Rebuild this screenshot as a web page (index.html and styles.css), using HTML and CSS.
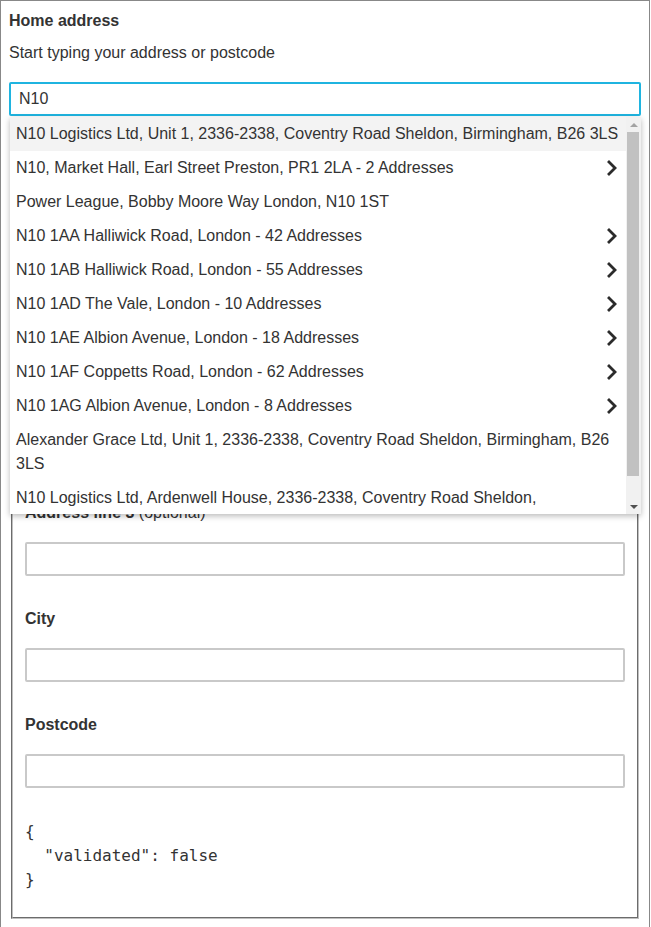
FILE: index.html
```html
<!DOCTYPE html>
<html lang="en">
<head>
<meta charset="utf-8">
<title>Home address</title>
<link rel="stylesheet" href="styles.css">
</head>
<body>
<div class="page">
  <div class="title">Home address</div>
  <p class="hint">Start typing your address or postcode</p>
  <div class="search">
    <input class="search-input" type="text" value="N10">
    <div class="menu">
      <ul class="list">
        <li class="item active"><span class="txt">N10 Logistics Ltd, Unit 1, 2336-2338, Coventry Road Sheldon, Birmingham, B26 3LS</span></li>
        <li class="item"><span class="txt">N10, Market Hall, Earl Street Preston, PR1 2LA - 2 Addresses</span><svg class="chev" viewBox="0 0 12 16" width="12" height="16"><polyline points="3,2 9,8 3,14" /></svg></li>
        <li class="item"><span class="txt">Power League, Bobby Moore Way London, N10 1ST</span></li>
        <li class="item"><span class="txt">N10 1AA Halliwick Road, London - 42 Addresses</span><svg class="chev" viewBox="0 0 12 16" width="12" height="16"><polyline points="3,2 9,8 3,14" /></svg></li>
        <li class="item"><span class="txt">N10 1AB Halliwick Road, London - 55 Addresses</span><svg class="chev" viewBox="0 0 12 16" width="12" height="16"><polyline points="3,2 9,8 3,14" /></svg></li>
        <li class="item"><span class="txt">N10 1AD The Vale, London - 10 Addresses</span><svg class="chev" viewBox="0 0 12 16" width="12" height="16"><polyline points="3,2 9,8 3,14" /></svg></li>
        <li class="item"><span class="txt">N10 1AE Albion Avenue, London - 18 Addresses</span><svg class="chev" viewBox="0 0 12 16" width="12" height="16"><polyline points="3,2 9,8 3,14" /></svg></li>
        <li class="item"><span class="txt">N10 1AF Coppetts Road, London - 62 Addresses</span><svg class="chev" viewBox="0 0 12 16" width="12" height="16"><polyline points="3,2 9,8 3,14" /></svg></li>
        <li class="item"><span class="txt">N10 1AG Albion Avenue, London - 8 Addresses</span><svg class="chev" viewBox="0 0 12 16" width="12" height="16"><polyline points="3,2 9,8 3,14" /></svg></li>
        <li class="item"><span class="txt">Alexander Grace Ltd, Unit 1, 2336-2338, Coventry Road Sheldon, Birmingham, B26 3LS</span></li>
        <li class="item"><span class="txt">N10 Logistics Ltd, Ardenwell House, 2336-2338, Coventry Road Sheldon, Birmingham, B26 3LS</span></li>
      </ul>
      <div class="scrollbar">
        <div class="sb-btn"><span class="tri-up"></span></div>
        <div class="sb-track"><div class="sb-thumb"></div></div>
        <div class="sb-btn"><span class="tri-down"></span></div>
      </div>
    </div>
  </div>
  <fieldset class="address">
    <div class="field">
      <label class="label">Address line 1</label>
      <input class="text-input" type="text">
    </div>
    <div class="field">
      <label class="label">Address line 2 <span class="opt">(optional)</span></label>
      <input class="text-input" type="text">
    </div>
    <div class="field">
      <label class="label">Address line 3 <span class="opt">(optional)</span></label>
      <input class="text-input" type="text">
    </div>
    <div class="field">
      <label class="label">City</label>
      <input class="text-input" type="text">
    </div>
    <div class="field">
      <label class="label">Postcode</label>
      <input class="text-input" type="text">
    </div>
    <pre class="json">{
  "validated": false
}</pre>
  </fieldset>
</div>
</body>
</html>
```

FILE: styles.css
```css
html, body {
  margin: 0;
  padding: 0;
  background: #fff;
}

body {
  font-family: "Liberation Sans", Arial, sans-serif;
  font-size: 16px;
  color: #333;
}

.page {
  width: 650px;
  box-sizing: border-box;
  border: 1px solid #888;
  padding: 9px 8px 40px;
}

.title {
  font-weight: bold;
  line-height: 22px;
  margin: 0 0 9px;
}

.hint {
  margin: 0 0 17px;
  line-height: 24px;
}

.search {
  position: relative;
}

.search-input {
  display: block;
  width: 100%;
  height: 34px;
  box-sizing: border-box;
  border: 2px solid #1fb4e0;
  border-radius: 2px;
  padding: 0 8px;
  font-family: "Liberation Sans", Arial, sans-serif;
  font-size: 16px;
  color: #333;
  outline: none;
  margin: 0;
}

.menu {
  position: absolute;
  top: calc(100% + 1px);
  left: 1px;
  right: 0;
  height: 397px;
  display: flex;
  background: #fff;
  box-shadow: 0 2px 6px rgba(0, 0, 0, 0.28);
  z-index: 10;
}

.list {
  flex: 1;
  min-width: 0;
  margin: 0;
  padding: 0;
  list-style: none;
  overflow: hidden;
}

.scrollbar {
  flex: none;
  width: 15px;
  display: flex;
  flex-direction: column;
  background: #f1f1f1;
}

.sb-btn {
  flex: none;
  height: 15px;
  display: flex;
  align-items: center;
  justify-content: center;
}

.tri-up {
  width: 0;
  height: 0;
  border-left: 4px solid transparent;
  border-right: 4px solid transparent;
  border-bottom: 4px solid #a3a3a3;
}

.tri-down {
  width: 0;
  height: 0;
  border-left: 4px solid transparent;
  border-right: 4px solid transparent;
  border-top: 4px solid #505050;
}

.sb-track {
  flex: 1;
  padding: 0 2px 0 1px;
}

.sb-thumb {
  height: 344px;
  background: #c1c1c1;
}

.item {
  display: flex;
  align-items: center;
  justify-content: space-between;
  padding: 5px 6px;
  line-height: 24px;
  color: #333;
}

.item.active {
  background: #f3f3f3;
}

.txt {
  flex: 1;
}

.chev {
  flex: none;
  margin-right: 2px;
  fill: none;
  stroke: #2b2b2b;
  stroke-width: 2.8;
  stroke-linecap: square;
}

.address {
  margin: 165px 2px 0;
  padding: 6px 12px 10px;
  border: 2px groove #c0c0c0;
}

.field {
  margin-bottom: 31px;
}

.label {
  display: block;
  font-weight: bold;
  line-height: 24px;
  margin-bottom: 17px;
}

.opt {
  font-weight: normal;
}

.text-input {
  display: block;
  width: 100%;
  height: 34px;
  box-sizing: border-box;
  border: 2px solid #c9c9c9;
  border-radius: 2px;
  padding: 0 8px;
  font-family: "Liberation Sans", Arial, sans-serif;
  font-size: 16px;
  margin: 0;
}

.json {
  font-family: "DejaVu Sans Mono", monospace;
  font-size: 16px;
  line-height: 24px;
  color: #333;
  margin: 32px 0 15px;
}
```
